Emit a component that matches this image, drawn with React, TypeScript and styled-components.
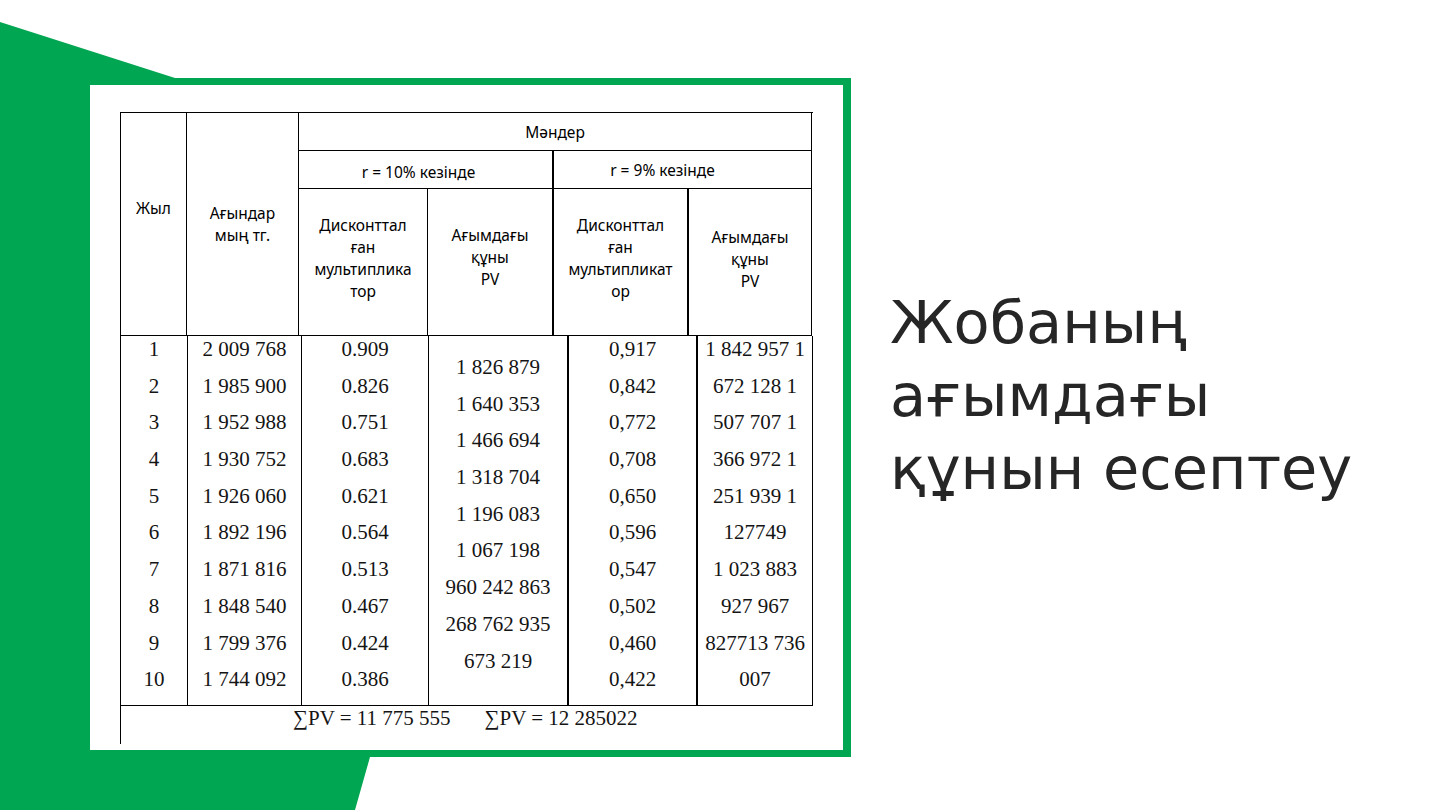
import React from "react";
import styled, { createGlobalStyle } from "styled-components";

const GlobalStyle = createGlobalStyle`
  html, body {
    margin: 0;
    padding: 0;
    background: #ffffff;
  }
  body {
    font-family: "Noto Sans", "DejaVu Sans", sans-serif;
  }
`;

const green = "#00a651";
const ink = "#000000";
const serif = `"Liberation Serif", "Times New Roman", serif`;
const sans = `"Noto Sans", "DejaVu Sans", sans-serif`;

const Slide = styled.div`
  position: relative;
  width: 1440px;
  height: 810px;
  overflow: hidden;
  display: flex;
  align-items: flex-start;
  background: #fff;
`;

const Backdrop = styled.svg`
  position: absolute;
  inset: 0;
  z-index: 0;
`;

const Panel = styled.div`
  position: relative;
  z-index: 1;
  box-sizing: border-box;
  width: 753px;
  height: 665px;
  margin: 85px 0 0 90px;
  padding: 27px 0 0 30px;
  background: #fff;
`;

const Table = styled.div`
  width: 692px;
  border-left: 1px solid ${ink};
  color: ${ink};
`;

const HeaderGrid = styled.div`
  display: grid;
  grid-template-columns: 66px 112px 129px 126px 135px 123px;
  grid-template-rows: 38px 38px 147px;
  border-top: 1px solid ${ink};
  font-family: ${sans};
  font-size: 15.5px;
  line-height: 22px;
`;

const HeadCell = styled.div<{
  $col: string;
  $row: string;
  $pad?: string;
  $top?: boolean;
  $rule?: number;
}>`
  grid-column: ${(p) => p.$col};
  grid-row: ${(p) => p.$row};
  box-sizing: border-box;
  display: flex;
  flex-direction: column;
  align-items: center;
  justify-content: ${(p) => (p.$top ? "flex-start" : "center")};
  padding: ${(p) => p.$pad || "0"};
  border-right: ${(p) => p.$rule || 1}px solid ${ink};
  border-bottom: 1px solid ${ink};
  text-align: center;
  white-space: nowrap;
`;

const BodyGrid = styled.div`
  display: grid;
  grid-template-columns: 67px 114px 127px 140px 129px 115px;
  height: 369px;
  border-bottom: 1px solid ${ink};
  font-family: ${serif};
  font-size: 21px;
  color: #141414;
`;

const BodyColumn = styled.div<{ $rule?: number }>`
  box-sizing: border-box;
  border-right: ${(p) => p.$rule || 1}px solid ${ink};
  overflow: hidden;
`;

const ValueList = styled.div<{ $shift: number }>`
  margin-top: ${(p) => p.$shift}px;
  display: flex;
  flex-direction: column;
  align-items: center;
`;

const Value = styled.div`
  height: 36.7px;
  line-height: 36.7px;
  white-space: nowrap;
`;

const Footer = styled.div`
  display: flex;
  height: 38px;
  padding-left: 172px;
  font-family: ${serif};
  font-size: 21px;
  line-height: 24px;
  color: #141414;
  white-space: nowrap;
`;

const Sum = styled.span<{ $gap?: number }>`
  margin-left: ${(p) => p.$gap || 0}px;
`;

const Title = styled.h1`
  position: relative;
  z-index: 1;
  margin: 286px 0 0 47px;
  font-family: "DejaVu Sans", "Noto Sans", sans-serif;
  font-weight: 400;
  font-size: 59px;
  line-height: 73px;
  color: #262626;
`;

const years = ["1", "2", "3", "4", "5", "6", "7", "8", "9", "10"];
const flows = [
  "2 009 768", "1 985 900", "1 952 988", "1 930 752", "1 926 060",
  "1 892 196", "1 871 816", "1 848 540", "1 799 376", "1 744 092",
];
const factors10 = [
  "0.909", "0.826", "0.751", "0.683", "0.621",
  "0.564", "0.513", "0.467", "0.424", "0.386",
];
const pv10 = [
  "1 826 879", "1 640 353", "1 466 694", "1 318 704", "1 196 083",
  "1 067 198", "960 242 863", "268 762 935", "673 219",
];
const factors9 = [
  "0,917", "0,842", "0,772", "0,708", "0,650",
  "0,596", "0,547", "0,502", "0,460", "0,422",
];
const pv9 = [
  "1 842 957 1", "672 128 1", "507 707 1", "366 972 1", "251 939 1",
  "127749", "1 023 883", "927 967", "827713 736", "007",
];

const bodyColumns = [
  { values: years, shift: -5, rule: 1 },
  { values: flows, shift: -5, rule: 1 },
  { values: factors10, shift: -5, rule: 1 },
  { values: pv10, shift: 13, rule: 2 },
  { values: factors9, shift: -5, rule: 2 },
  { values: pv9, shift: -5, rule: 1 },
];

const Lines = ({ items }: { items: string[] }) => (
  <>
    {items.map((line) => (
      <span key={line}>{line}</span>
    ))}
  </>
);

export default function App() {
  return (
    <>
      <GlobalStyle />
      <Slide>
        <Backdrop width="1440" height="810" viewBox="0 0 1440 810">
          <polygon
            points="0,22 175,78 851,78 851,757 370,757 355,810 0,810"
            fill={green}
          />
        </Backdrop>

        <Panel>
          <Table>
            <HeaderGrid>
              <HeadCell $col="1" $row="1 / 4" $top $pad="84px 0 0 0">
                Жыл
              </HeadCell>
              <HeadCell $col="2" $row="1 / 4" $top $pad="89px 0 0 0">
                <Lines items={["Ағындар", "мың тг."]} />
              </HeadCell>
              <HeadCell $col="3 / 7" $row="1">
                Мәндер
              </HeadCell>
              <HeadCell $col="3 / 5" $row="2" $rule={2} $pad="4px 14px 0 0">
                r = 10% кезінде
              </HeadCell>
              <HeadCell $col="5 / 7" $row="2" $pad="0 40px 0 0">
                r = 9% кезінде
              </HeadCell>
              <HeadCell $col="3" $row="3" $pad="0 0 8px 0">
                <Lines items={["Дисконттал", "ған", "мультиплика", "тор"]} />
              </HeadCell>
              <HeadCell $col="4" $row="3" $rule={2} $pad="0 0 10px 0">
                <Lines items={["Ағымдағы", "құны", "PV"]} />
              </HeadCell>
              <HeadCell $col="5" $row="3" $rule={2} $pad="0 0 8px 0">
                <Lines items={["Дисконттал", "ған", "мультипликат", "ор"]} />
              </HeadCell>
              <HeadCell $col="6" $row="3" $pad="0 0 6px 0">
                <Lines items={["Ағымдағы", "құны", "PV"]} />
              </HeadCell>
            </HeaderGrid>

            <BodyGrid>
              {bodyColumns.map((column, i) => (
                <BodyColumn key={i} $rule={column.rule}>
                  <ValueList $shift={column.shift}>
                    {column.values.map((v, j) => (
                      <Value key={j}>{v}</Value>
                    ))}
                  </ValueList>
                </BodyColumn>
              ))}
            </BodyGrid>

            <Footer>
              <Sum>∑PV = 11 775 555</Sum>
              <Sum $gap={34}>∑PV = 12 285022</Sum>
            </Footer>
          </Table>
        </Panel>

        <Title>
          Жобаның
          <br />
          ағымдағы
          <br />
          құнын есептеу
        </Title>
      </Slide>
    </>
  );
}
